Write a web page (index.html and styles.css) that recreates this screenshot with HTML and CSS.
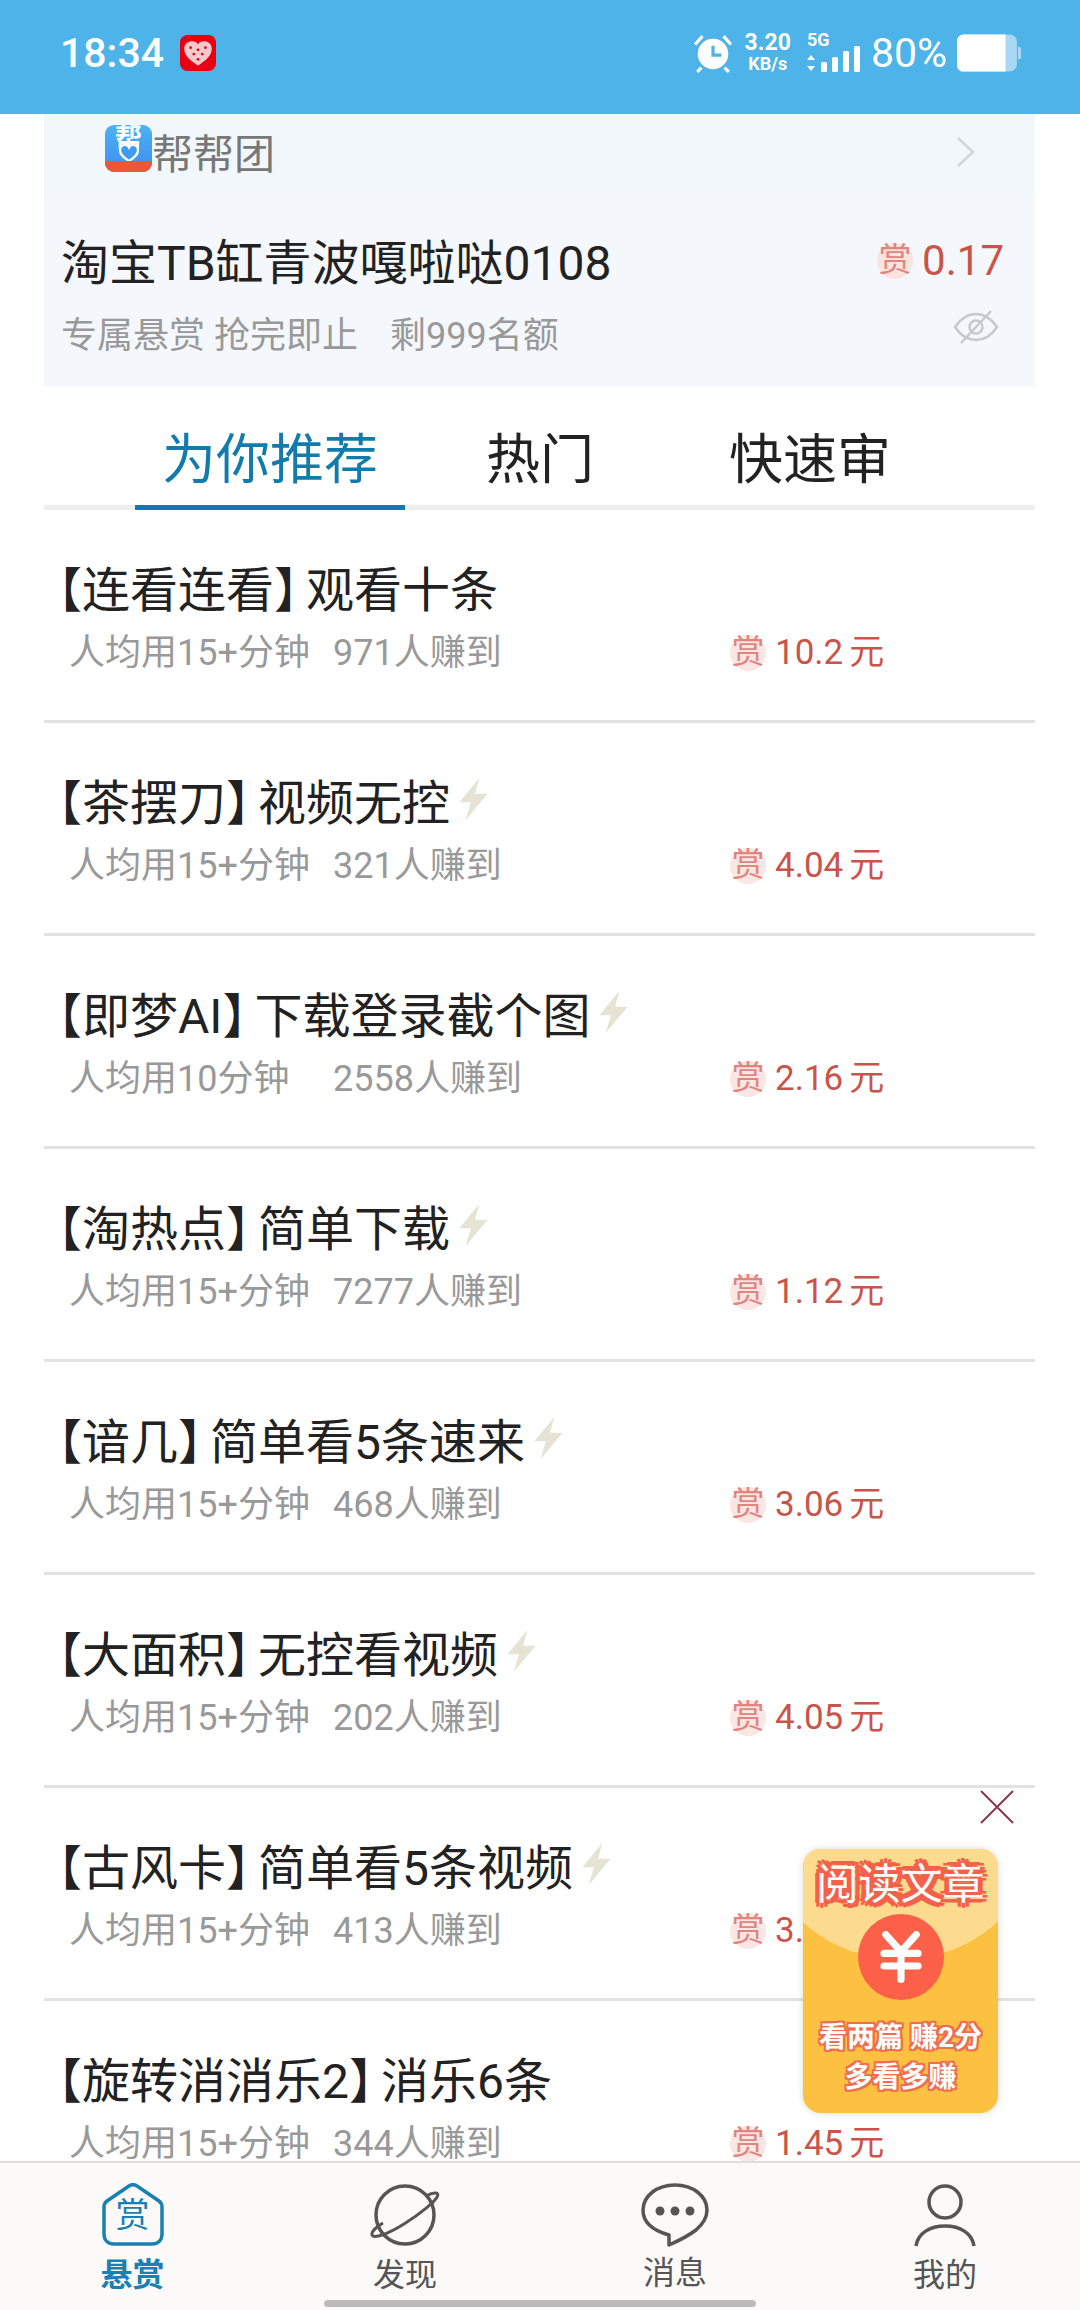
FILE: index.html
```html
<!doctype html>
<html lang="zh-CN">
    <head>
        <meta charset="utf-8">
        <title>悬赏</title>
        <link rel="stylesheet" href="styles.css">
    </head>
    <body>
        <div class="status-bar">
            <span class="time">18:34</span>
            <svg class="pdd" width="36" height="36" viewBox="0 0 34 34">
                <rect width="34" height="34" rx="7" fill="#e60012"/>
                <path d="M17 29 C10 24 4 20 4 13 C4 8 8 6 11.500 6 C14 6 16 7 17 9 C18 7 20 6 22.500 6 C26 6 30 8 30 13 C30 20 24 24 17 29Z" fill="#f8c9cc"/>
                <g fill="#e60012">
                    <circle cx="10" cy="12" r="1.300"/><circle cx="17" cy="14" r="1.300"/><circle cx="24" cy="12" r="1.300"/>
                    <circle cx="13" cy="18" r="1.300"/><circle cx="21" cy="18" r="1.300"/><circle cx="17" cy="23" r="1.300"/>
                </g>
            </svg>
            <div class="status-right">
                <svg width="40" height="40" viewBox="0 0 38 38">
                    <circle cx="19" cy="20" r="14.500" fill="#fff"/>
                    <path d="M19 12v9h8" fill="none" stroke="#4db3e8" stroke-width="3"/>
                    <path d="M2 11 9 3M36 11 29 3M8 33l-4 4M30 33l4 4" stroke="#fff" stroke-width="3" fill="none"/>
                </svg>
                <div class="speed"><span>3.20</span><span class="speed-unit">KB/s</span></div>
                <div class="signal">
                    <span class="five-g">5G</span>
                    <svg width="54" height="26" viewBox="0 0 54 26">
                        <path d="M4 9 8 14H0ZM4 25 0 20H8Z" fill="#fff"/>
                        <g fill="#fff">
                            <rect x="14" y="16" width="6" height="10" rx="1.500"/>
                            <rect x="25" y="11" width="6" height="15" rx="1.500"/>
                            <rect x="36" y="5" width="6" height="21" rx="1.500"/>
                            <rect x="47" y="0" width="6" height="26" rx="1.500"/>
                        </g>
                    </svg>
                </div>
                <span class="battery-text">80%</span>
                <svg width="64" height="38" viewBox="0 0 62 36">
                    <path d="M6 0H51C55 0 58 3 58 7V29C58 33 55 36 51 36H6C3 36 0 33 0 30V6C0 3 3 0 6 0Z" fill="#a8d8f4"/>
                    <path d="M6 0H47V36H6C3 36 0 33 0 30V6C0 3 3 0 6 0Z" fill="#fff"/>
                    <path d="M59 12h1c1 0 2 1 2 2v8c0 1-1 2-2 2h-1Z" fill="#a8d8f4"/>
                </svg>
            </div>
        </div>

        <div class="top-card">
            <div class="team-row">
                <span class="team-logo">
                    <span class="team-logo-char">帮</span>
                    <svg class="team-logo-heart" width="22" height="18" viewBox="0 0 24 20">
                        <path d="M12 19C6 15 2 12 2 7C2 3 5 1 8 1C10 1 11 2 12 4C13 2 14 1 16 1C19 1 22 3 22 7C22 12 18 15 12 19Z" fill="#3f9bf2" stroke="#fff" stroke-width="2.500"/>
                    </svg>
                    <span class="team-logo-band"></span>
                </span>
                <span class="team-name">帮帮团</span>
                <svg class="chevron" width="20" height="32" viewBox="0 0 20 32">
                    <path d="M2 2 17 16 2 30" fill="none" stroke="#d2d6d9" stroke-width="2.500"/>
                </svg>
            </div>
            <div class="task-row">
                <div class="task-left">
                    <div class="task-title">淘宝TB缸青波嘎啦哒0108</div>
                    <div class="task-sub"><span>专属悬赏 抢完即止</span><span>剩999名额</span></div>
                </div>
                <div class="task-right">
                    <div class="reward reward-big"><span class="shang">赏</span>0.17</div>
                    <svg class="eye" width="46" height="36" viewBox="0 0 46 36">
                        <path d="M2 18C8 9 15 5 23 5S38 9 44 18C38 27 31 31 23 31S8 27 2 18Z" fill="none" stroke="#c6c9cc" stroke-width="2.500"/>
                        <circle cx="23" cy="18" r="6.500" fill="none" stroke="#c6c9cc" stroke-width="2.500"/>
                        <path d="M38 2 8 34" stroke="#c6c9cc" stroke-width="2.500"/>
                    </svg>
                </div>
            </div>
        </div>

        <div class="tabs">
            <div class="tab tab-active">为你推荐</div>
            <div class="tab">热门</div>
            <div class="tab">快速审</div>
        </div>

        <div class="list" id="list"></div>

        <svg class="float-close" width="34" height="34" viewBox="0 0 34 34">
            <path d="M1 1 33 33M33 1 1 33" stroke="#8a3a4c" stroke-width="2"/>
        </svg>
        <div class="float-ad">
            <div class="float-flap"></div>
            <div class="float-heading">阅读文章</div>
            <div class="float-coin">
                <svg width="46" height="58" viewBox="0 0 46 58">
                    <path d="M6 4 23 23 40 4M4 25H42M4 39H42M23 23V54" fill="none" stroke="#fff" stroke-width="8" stroke-linecap="round"/>
                </svg>
            </div>
            <div class="float-line">看两篇 赚2分</div>
            <div class="float-line">多看多赚</div>
        </div>

        <div class="nav">
            <div class="nav-item nav-active">
                <svg width="62" height="64" viewBox="0 0 62 64">
                    <path d="M27 3 5 18C3 19.500 2 21 2 24V51C2 57 6 61 12 61H50C56 61 60 57 60 51V24C60 21 59 19.500 57 18L35 3C32 1 30 1 27 3Z" fill="none" stroke="#1a7fb3" stroke-width="3.500"/>
                </svg>
                <span class="nav-icon-char">赏</span>
                <span class="nav-label">悬赏</span>
            </div>
            <div class="nav-item">
                <svg width="70" height="64" viewBox="0 0 70 64">
                    <circle cx="35" cy="32" r="29" fill="none" stroke="#555" stroke-width="3.500"/>
                    <path d="M56 13C64 9 69 9 67.500 13C66 18 50 31 34 41C18 51 4 56 2 52C1 49 6 44 13 40" fill="none" stroke="#555" stroke-width="3"/>
                </svg>
                <span class="nav-label">发现</span>
            </div>
            <div class="nav-item nav-item-msg">
                <svg width="68" height="64" viewBox="0 0 68 64">
                    <path d="M34 2C16 2 2 13 2 27C2 38 10 47 28 52L28 62C37 58 46 54 55 47C62 41 66 35 66 27C66 13 52 2 34 2Z" fill="none" stroke="#555" stroke-width="3.500" stroke-linejoin="round"/>
                    <circle cx="19" cy="28" r="4.500" fill="#555"/><circle cx="34" cy="28" r="4.500" fill="#555"/><circle cx="49" cy="28" r="4.500" fill="#555"/>
                </svg>
                <span class="nav-label">消息</span>
            </div>
            <div class="nav-item">
                <svg width="62" height="64" viewBox="0 0 62 64">
                    <circle cx="31" cy="19" r="16" fill="none" stroke="#555" stroke-width="3.500"/>
                    <path d="M2 63C4 50 16 43 31 43S58 50 60 63" fill="none" stroke="#555" stroke-width="3.500"/>
                </svg>
                <span class="nav-label">我的</span>
            </div>
            <div class="home-bar"></div>
        </div>

        <script>
            let tasks = [
                ['连看连看', '观看十条', '人均用15+分钟', '971人赚到', '10.2', false],
                ['茶摆刀', '视频无控', '人均用15+分钟', '321人赚到', '4.04', true],
                ['即梦AI', '下载登录截个图', '人均用10分钟', '2558人赚到', '2.16', true],
                ['淘热点', '简单下载', '人均用15+分钟', '7277人赚到', '1.12', true],
                ['谙几', '简单看5条速来', '人均用15+分钟', '468人赚到', '3.06', true],
                ['大面积', '无控看视频', '人均用15+分钟', '202人赚到', '4.05', true],
                ['古风卡', '简单看5条视频', '人均用15+分钟', '413人赚到', '3.11', true],
                ['旋转消消乐2', '消乐6条', '人均用15+分钟', '344人赚到', '1.45', false]
            ];
            let bolt = '<svg class="bolt" width="34" height="44" viewBox="0 0 32 42">'
                + '<path d="M22 1 3 24H14L9 41 30 16H18Z" fill="#e6e3d4"/></svg>';
            let html = '';
            tasks.forEach(([tag, name, time, count, money, fast]) => {
                html += '<div class="row"><div class="row-left">'
                    + '<div class="row-title"><span class="bracket-l">【</span>' + tag + '<span class="bracket-r">】</span>' + name + (fast ? bolt : '') + '</div>'
                    + '<div class="row-sub"><span class="row-time">' + time + '</span><span>' + count + '</span></div>'
                    + '</div><div class="reward"><span class="shang">赏</span>' + money + '<span class="yuan">元</span></div></div>';
            });
            document.getElementById('list').innerHTML = html;
        </script>
    </body>
</html>
```

FILE: styles.css
```css
* {
    box-sizing: border-box;
}
html, body {
    margin: 0;
    height: 2310px;
    overflow: hidden;
}
body {
    position: relative;
    width: 1080px;
    background: #fff;
    color: #222;
    font-family: Roboto, "Noto Sans CJK SC", sans-serif;
}

/* status bar */
.status-bar {
    display: flex;
    align-items: center;
    height: 114px;
    padding: 0 59px 8px 60px;
    background: #4db3e8;
    color: #fff;
}
.time {
    font-size: 41px;
    font-weight: 500;
}
.pdd {
    margin-left: 16px;
}
.status-right {
    display: flex;
    align-items: center;
    margin-left: auto;
}
.speed {
    display: flex;
    flex-direction: column;
    align-items: center;
    margin-left: 12px;
    font-size: 23px;
    font-weight: 700;
    line-height: 21px;
}
.speed-unit {
    font-size: 18px;
}
.signal {
    display: flex;
    flex-direction: column;
    margin-left: 16px;
}
.five-g {
    font-size: 18px;
    font-weight: 700;
    line-height: 12px;
}
.battery-text {
    margin: 0 10px;
    font-size: 41px;
}

/* pinned card */
.top-card {
    margin: 0 45px 0 44px;
    background: #f4f8fc;
}
.team-row {
    display: flex;
    align-items: center;
    height: 82px;
    padding: 0 59px 0 61px;
    background: #f1f7fb;
}
.team-logo {
    position: relative;
    display: block;
    width: 47px;
    height: 47px;
    margin-bottom: 14px;
    border-radius: 9px;
    background: linear-gradient(#4fb0f4, #3b8ff0);
    color: #fff;
    font-size: 27px;
    font-weight: 700;
    line-height: 28px;
    text-align: center;
}
.team-logo-char {
    display: block;
}
.team-logo-heart {
    position: absolute;
    left: 13px;
    top: 19px;
}
.team-logo-band {
    position: absolute;
    left: 0;
    right: 0;
    bottom: 0;
    height: 11px;
    border-radius: 0 0 9px 9px;
    background: #e8593a;
}
.team-name {
    margin-bottom: 1px;
    color: #777;
    font-size: 41px;
    line-height: 50px;
}
.chevron {
    margin: 0 0 6px auto;
}
.task-row {
    display: flex;
    justify-content: space-between;
    height: 191px;
    padding: 38px 31px 0 17px;
}
.task-title {
    font-size: 48px;
    line-height: 60px;
}
.task-sub {
    display: flex;
    gap: 32px;
    margin-top: 19px;
    color: #999;
    font-size: 36px;
    line-height: 46px;
}
.task-right {
    display: flex;
    flex-direction: column;
    align-items: flex-end;
}
.eye {
    margin: 21px 5px 0 0;
}
.reward {
    display: flex;
    align-items: center;
    color: #c9544a;
    font-size: 35px;
    line-height: 40px;
    white-space: nowrap;
}
.reward-big {
    height: 54px;
    font-size: 42px;
}
.shang {
    width: 36px;
    height: 36px;
    margin-right: 9px;
    border-radius: 50%;
    background: #fbe6e4;
    color: #e0867e;
    font-size: 33px;
    line-height: 34px;
    text-align: center;
}
.reward-big .shang {
    background: #fbe3e0;
}
.yuan {
    margin-left: 6px;
}

/* tabs */
.tabs {
    display: flex;
    height: 123px;
    margin: 0 45px 0 44px;
    padding-left: 91px;
    border-bottom: 5px solid #eee;
}
.tab {
    width: 270px;
    height: 123px;
    font-size: 54px;
    line-height: 148px;
    text-align: center;
}
.tab-active {
    border-bottom: 5px solid #127bad;
    color: #127bad;
}

/* task list */
.row {
    display: flex;
    justify-content: space-between;
    height: 213px;
    margin: 0 45px 0 44px;
    padding: 46px 0 0 0;
    border-bottom: 3px solid #e2e2e2;
}
.row-left {
    width: 686px;
}
.row-title {
    display: flex;
    align-items: center;
    height: 60px;
    font-size: 48px;
    white-space: nowrap;
}
.bracket-l {
    margin-left: 14px;
    font-feature-settings: "halt";
}
.bracket-r {
    margin-right: 8px;
    font-feature-settings: "halt";
}
.bolt {
    margin-left: 6px;
}
.row-sub {
    display: flex;
    margin-top: 14px;
    padding-left: 25px;
    color: #999;
    font-size: 36px;
    line-height: 46px;
}
.row-time {
    width: 264px;
}
.row .reward {
    align-self: flex-start;
    margin-top: 77px;
    width: 305px;
}

/* floating ad */
.float-close {
    position: absolute;
    left: 980px;
    top: 1790px;
}
.float-ad {
    position: absolute;
    left: 803px;
    top: 1849px;
    width: 195px;
    height: 264px;
    border-radius: 18px;
    overflow: hidden;
    background: #fcc140;
    box-shadow: 0 0 6px rgba(120, 100, 60, .25);
    text-align: center;
}
.float-flap {
    position: absolute;
    left: -33px;
    top: -110px;
    width: 260px;
    height: 220px;
    border-radius: 50%;
    background: #fcdb8e;
}
.float-heading {
    position: relative;
    margin-top: 14px;
    color: #fff;
    font-size: 42px;
    line-height: 44px;
    white-space: nowrap;
    text-shadow: 5px 0 #f4614a, -5px 0 #f4614a, 0 5px #f4614a, 0 -5px #f4614a, 4px 4px #f4614a, -4px 4px #f4614a, 4px -4px #f4614a, -4px -4px #f4614a;
}
.float-coin {
    position: relative;
    display: flex;
    align-items: center;
    justify-content: center;
    width: 86px;
    height: 86px;
    margin: 7px auto 18px;
    border-radius: 50%;
    background: #fb6048;
}
.float-coin svg {
    width: 42px;
    height: 52px;
}
.float-line {
    position: relative;
    color: #fff;
    font-size: 28px;
    font-weight: 700;
    line-height: 40px;
    white-space: nowrap;
    text-shadow: 2px 0 #ef6d50, -2px 0 #ef6d50, 0 2px #ef6d50, 0 -2px #ef6d50, 2px 2px #ef6d50, -2px 2px #ef6d50, 2px -2px #ef6d50, -2px -2px #ef6d50;
}

/* bottom nav */
.nav {
    position: absolute;
    left: 0;
    right: 0;
    bottom: 0;
    display: grid;
    grid-template-columns: repeat(4, 270px);
    height: 149px;
    padding-top: 20px;
    border-top: 2px solid #ddd;
    background: #fbfaf8;
}
.nav-item {
    position: relative;
    display: flex;
    flex-direction: column;
    align-items: center;
    color: #555;
}
.nav-active {
    padding-right: 5px;
    color: #1a7fb3;
}
.nav-icon-char {
    position: absolute;
    top: 12px;
    left: 0;
    right: 5px;
    color: #1a7fb3;
    font-size: 34px;
    line-height: 40px;
    text-align: center;
}
.nav-label {
    margin-top: 11px;
    font-size: 32px;
    line-height: 34px;
}
.nav-active .nav-label {
    font-weight: 700;
}
.nav-item-msg .nav-label {
    margin-top: 9px;
}
.home-bar {
    position: absolute;
    left: 324px;
    bottom: 3px;
    width: 432px;
    height: 7px;
    border-radius: 4px;
    background: #bbb;
}
```
